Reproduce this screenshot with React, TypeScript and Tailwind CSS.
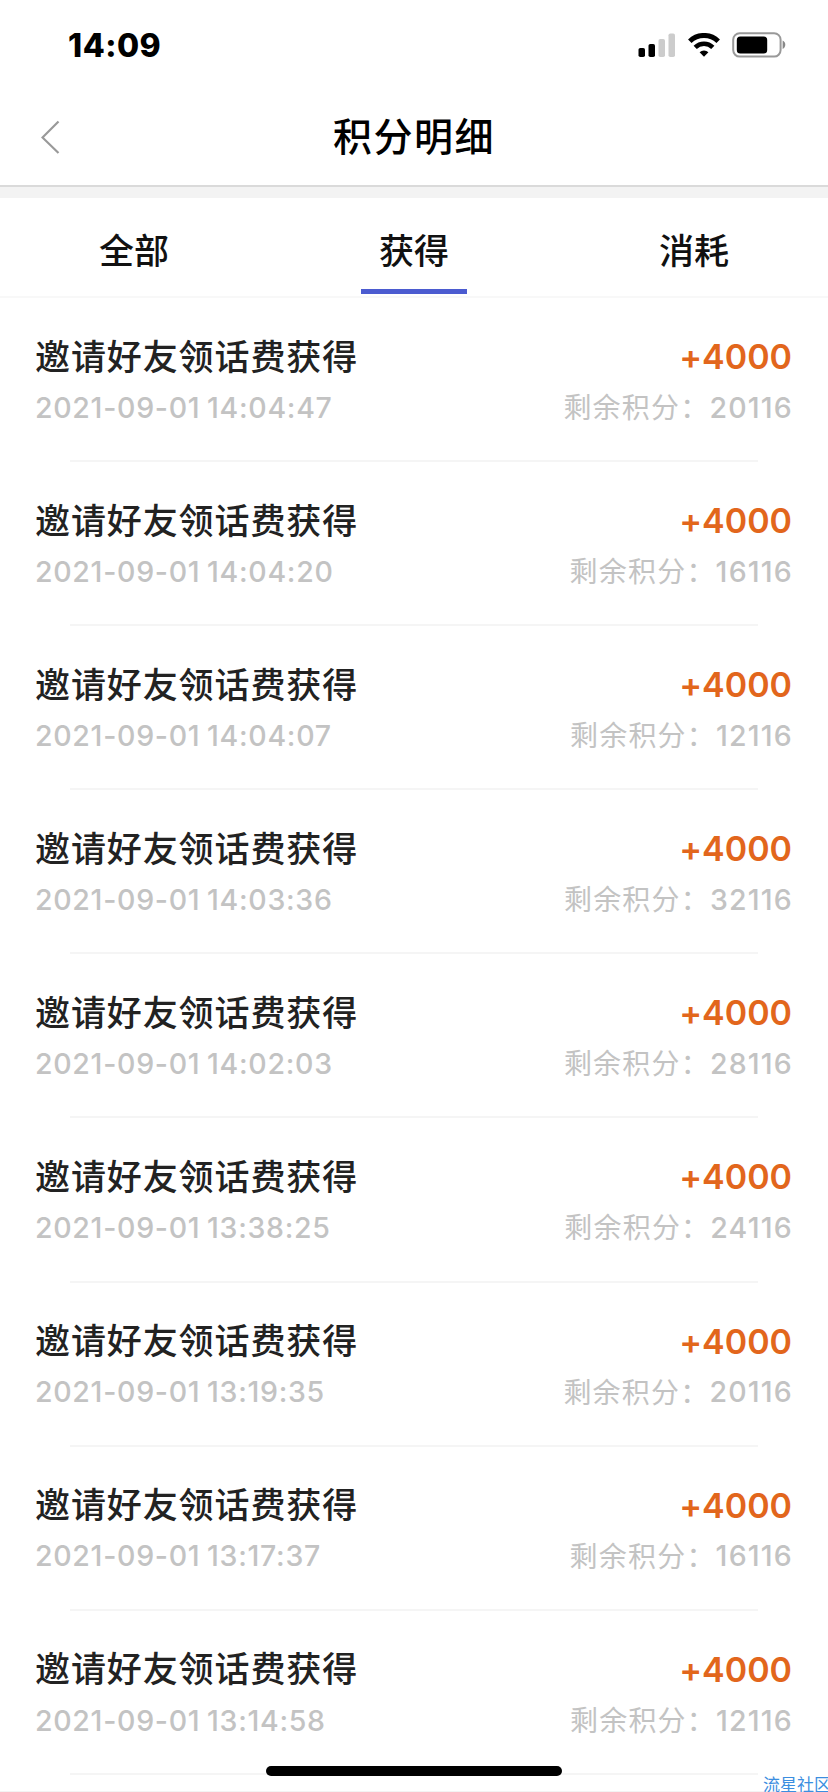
import React, { useState } from "react";

interface RecordType {
  id: number;
  time: string;
  balance: string;
}

const tabs = ["全部", "获得", "消耗"];

const records: RecordType[] = [
  { id: 1, time: "2021-09-01 14:04:47", balance: "20116" },
  { id: 2, time: "2021-09-01 14:04:20", balance: "16116" },
  { id: 3, time: "2021-09-01 14:04:07", balance: "12116" },
  { id: 4, time: "2021-09-01 14:03:36", balance: "32116" },
  { id: 5, time: "2021-09-01 14:02:03", balance: "28116" },
  { id: 6, time: "2021-09-01 13:38:25", balance: "24116" },
  { id: 7, time: "2021-09-01 13:19:35", balance: "20116" },
  { id: 8, time: "2021-09-01 13:17:37", balance: "16116" },
  { id: 9, time: "2021-09-01 13:14:58", balance: "12116" },
];

const StatusBar = () => (
  <div className="flex h-[88px] shrink-0 items-center justify-between pl-[68px] pr-[42px]">
    <div className="mt-[4px] text-[32px] leading-none font-extrabold tracking-[0.5px]">14:09</div>
    <div className="mt-[2px] flex items-center">
      <svg width="38" height="24" viewBox="0 0 38 24">
        <rect x="0.5" y="15" width="6.5" height="9" rx="1.8" fill="#000" />
        <rect x="10.5" y="11" width="6.5" height="13" rx="1.8" fill="#000" />
        <rect x="20.5" y="6" width="6.5" height="18" rx="1.8" fill="#ccc" />
        <rect x="30.5" y="0.5" width="6.5" height="23.5" rx="1.8" fill="#ccc" />
      </svg>
      <svg className="ml-3" width="32" height="24" viewBox="0 0 32 24">
        <path d="M1.8 8.2a20.4 20.4 0 0 1 28.4 0" fill="none" stroke="#000" strokeWidth="5" />
        <path d="M7.2 14.4a12.6 12.6 0 0 1 17.6 0" fill="none" stroke="#000" strokeWidth="4.6" />
        <path d="M11.6 19.2a6.4 6.4 0 0 1 8.8 0L16 23.8z" fill="#000" />
      </svg>
      <svg className="ml-3" width="54" height="26" viewBox="0 0 54 26">
        <rect x="1.2" y="1.2" width="47.4" height="23.4" rx="6.5" fill="none" stroke="#999" strokeWidth="2" />
        <rect x="4.8" y="4.5" width="30.4" height="17" rx="3.5" fill="#000" />
        <path d="M50.6 8.6c3.6 1.2 3.6 7.2 0 8.4z" fill="#888" />
      </svg>
    </div>
  </div>
);

const Header = () => (
  <div className="grid h-[99px] shrink-0 grid-cols-[1fr_auto_1fr] items-center border-b-2 border-[#dadada]">
    <svg className="mt-px ml-[41px]" width="20" height="36" viewBox="0 0 20 36">
      <path d="M17.5 2.5L1.5 18.5L17.5 34" fill="none" stroke="#999" strokeWidth="2.2" />
    </svg>
    <div className="text-[39px] leading-none font-medium tracking-[1.5px]">积分明细</div>
  </div>
);

const RecordItem = ({ item }: { item: RecordType }) => (
  <div className="flex h-[164.1px] shrink-0 flex-col pt-[37px]">
    <div className="flex h-[44px] items-center justify-between pl-[35px] pr-9">
      <div className="text-[35px] leading-none font-medium tracking-[0.9px] text-[#222]">邀请好友领话费获得</div>
      <div className="text-[34px] leading-none font-semibold text-[#e2661c] [font-feature-settings:'calt'_0]">+4000</div>
    </div>
    <div className="mt-[7px] flex h-[44px] items-center justify-between pl-[35px] pr-[35px] text-[28.5px] leading-none font-medium text-[#c3c3c3]">
      <div className="tracking-[0.7px] [word-spacing:-1.5px]">{item.time}</div>
      <div className="flex items-center">
        <span className="text-[28px] font-normal tracking-[1.2px]">剩余积分：</span>
        <span className="tracking-[1.2px]">{item.balance}</span>
      </div>
    </div>
    <div className="mx-[70px] mt-auto h-[2px] shrink-0 bg-[#f5f5f5]"></div>
  </div>
);

const App = () => {
  const [active, setActive] = useState<number>(1);

  return (
    <div className="relative flex h-[1792px] w-[828px] flex-col overflow-hidden bg-white font-['Inter','Noto_Sans_CJK_SC',sans-serif] text-black">
      <StatusBar />
      <Header />
      <div className="h-[11px] shrink-0 bg-[#f3f3f3]"></div>
      <div className="flex h-[100px] shrink-0 justify-between border-b-2 border-[#f8f8f8] px-[81px]">
        {tabs.map((tab, index) => (
          <button
            key={tab}
            className={`mb-[2px] flex w-[106px] flex-col items-center justify-center border-b-[5px] pt-[15px] text-[35px] leading-none font-medium text-[#111] ${
              active === index ? "border-[#4b5bd0]" : "border-transparent"
            }`}
            onClick={() => setActive(index)}
          >
            {tab}
          </button>
        ))}
      </div>
      <div className="flex flex-col">
        {records.map((item) => (
          <RecordItem key={item.id} item={item} />
        ))}
      </div>
      <div className="absolute bottom-0 left-0 h-px w-full bg-[#f3f3f3]"></div>
      {/* home indicator */}
      <div className="absolute top-[1766px] left-[266px] h-[10px] w-[296px] rounded-full bg-black"></div>
      <div className="absolute top-[1777px] left-[763px] text-[17px] leading-none whitespace-nowrap text-[#3b8ee0]">
        流星社区
      </div>
    </div>
  );
};

export default App;
